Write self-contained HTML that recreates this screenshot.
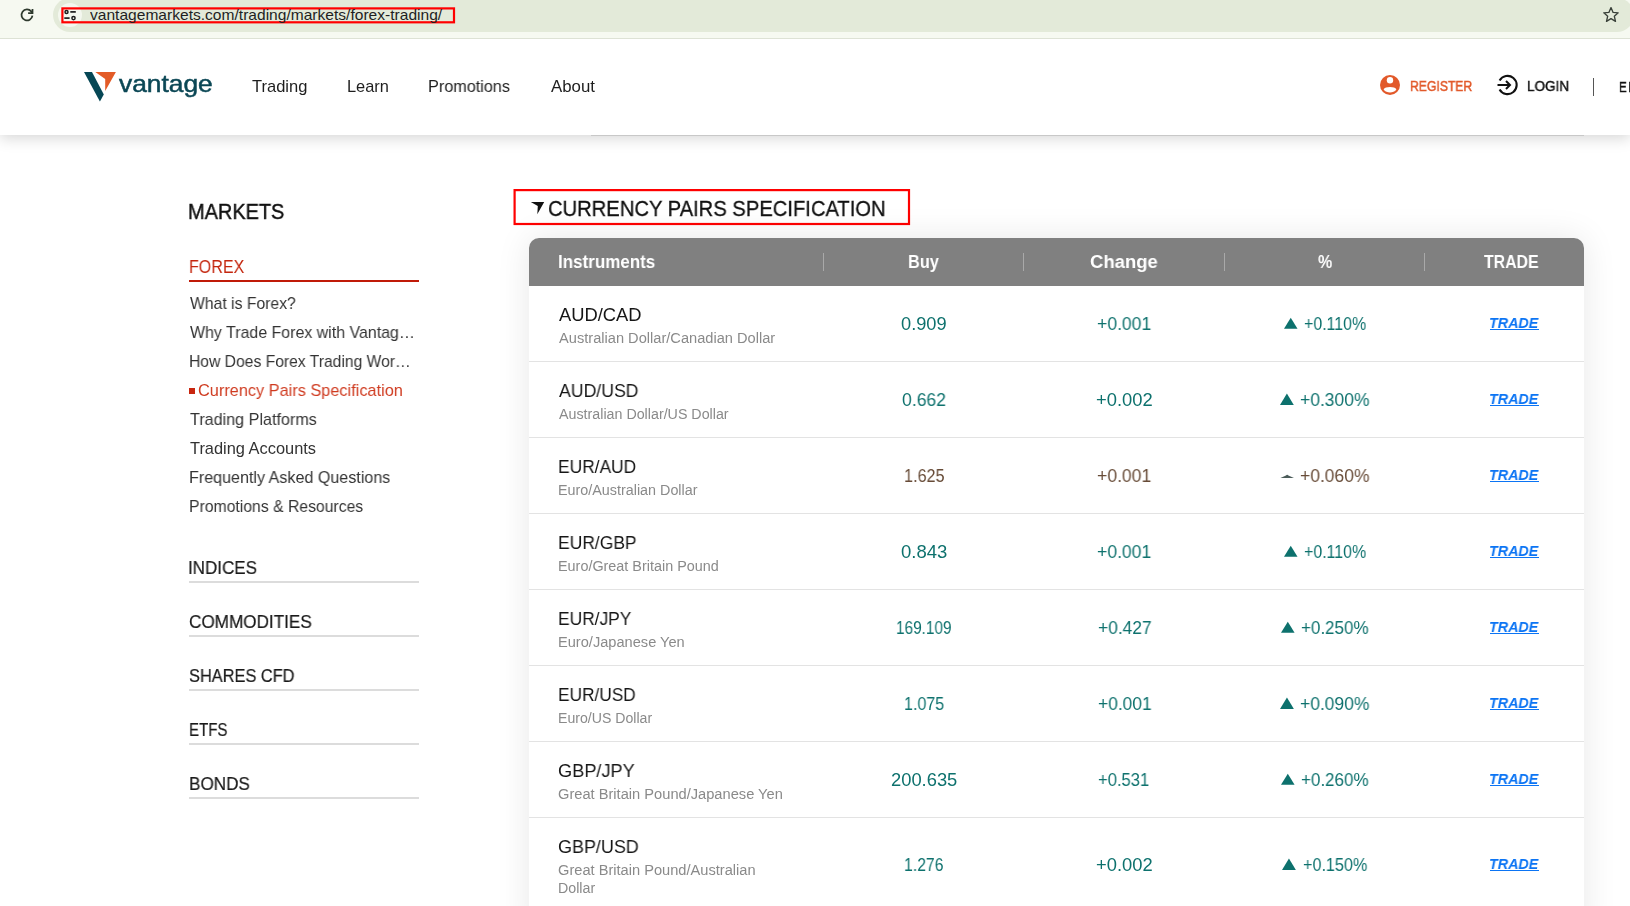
<!DOCTYPE html>
<html>
<head>
<meta charset="utf-8">
<style>
html,body{margin:0;padding:0;}
body{width:1630px;height:906px;overflow:hidden;position:relative;background:#ffffff;font-family:"Liberation Sans",sans-serif;}
.t{position:absolute;white-space:nowrap;line-height:1;transform-origin:0 0;font-family:"Liberation Sans",sans-serif;}
.abs{position:absolute;}
.tri{position:absolute;}
#toolbar{position:absolute;left:0;top:0;width:1630px;height:38px;background:#f6f9f1;border-bottom:1px solid #dde2d5;}
#pill{position:absolute;left:53px;top:-2px;width:1581px;height:34px;border-radius:17px;background:#e3ead9;}
#iconbg{position:absolute;left:58px;top:3px;width:24px;height:24px;border-radius:12px;background:#f4f7ef;}
#urlbox{position:absolute;left:61.3px;top:7.3px;width:389.8px;height:12.1px;border:2px solid #ff0000;}
#header{position:absolute;left:0;top:39px;width:1630px;height:96px;background:#ffffff;box-shadow:0 3px 14px rgba(0,0,0,0.17);}
#hline{position:absolute;left:591px;top:135px;width:993px;height:1px;background:#c8c8c8;}
.fline{position:absolute;left:189px;width:230px;height:2px;background:#dcdcdc;}
#titlebox{position:absolute;left:513px;top:189px;width:394px;height:32px;border:2px solid #ff0000;}
#table{position:absolute;left:529px;top:238px;width:1055px;height:700px;background:#fff;border-radius:10px 10px 0 0;box-shadow:0 0 34px rgba(0,0,0,0.095);}
#thead{position:absolute;left:529px;top:238px;width:1055px;height:48px;background:#808080;border-radius:10px 10px 0 0;}
.vdiv{position:absolute;top:253px;width:1px;height:18px;background:#a9a9a9;}
.hsep{position:absolute;left:529px;width:1055px;height:1px;background:#e3e3e3;}
</style>
</head>
<body>
<div id="header"></div>
<div id="toolbar"></div>
<div id="pill"></div>
<div id="iconbg"></div>
<!-- reload icon -->
<svg class="abs" style="left:16px;top:4px" width="22" height="22" viewBox="0 0 22 22">
  <path d="M16.45 11.67 A5.5 5.5 0 1 1 15.21 7.36 L16.3 8.9" fill="none" stroke="#2e3a2e" stroke-width="1.75"/>
  <polyline points="16.5,5.0 16.5,9.2 12.1,9.2" fill="none" stroke="#2e3a2e" stroke-width="1.75"/>
</svg>
<!-- tune icon -->
<svg class="abs" style="left:62px;top:8px" width="16" height="14" viewBox="0 0 16 14">
  <circle cx="4.5" cy="3.9" r="1.5" fill="none" stroke="#1c1c1c" stroke-width="1.5"/>
  <line x1="8.3" y1="3.9" x2="13.8" y2="3.9" stroke="#1c1c1c" stroke-width="1.7"/>
  <line x1="2.3" y1="10.1" x2="7.6" y2="10.1" stroke="#1c1c1c" stroke-width="1.7"/>
  <circle cx="11.5" cy="10.1" r="1.6" fill="none" stroke="#1c1c1c" stroke-width="1.5"/>
</svg>
<svg class="abs" style="left:0;top:0" width="470" height="30"><rect x="62.4" y="8.4" width="391.6" height="13.9" fill="none" stroke="#ff0000" stroke-width="2.2"/></svg>
<!-- star -->
<svg class="abs" style="left:1602px;top:6px" width="18" height="18" viewBox="0 0 18 18">
  <polygon points="9,1.6 11.1,6.4 16.2,6.8 12.3,10.2 13.5,15.3 9,12.6 4.5,15.3 5.7,10.2 1.8,6.8 6.9,6.4" fill="none" stroke="#394039" stroke-width="1.35" stroke-linejoin="round"/>
</svg>

<div id="hline"></div>
<!-- logo -->
<svg class="abs" style="left:80px;top:68px" width="140" height="36" viewBox="80 68 140 36">
  <polygon points="84,72 92,72 103.8,94.4 99.9,101.4" fill="#064755"/>
  <polygon points="95.3,72 115.9,72 105.2,91 105.2,78.9" fill="#e35b27"/>
</svg>
<!-- register icon -->
<svg class="abs" style="left:1379px;top:74px" width="22" height="22" viewBox="0 0 22 22">
  <circle cx="11" cy="11" r="10" fill="#e2592a"/>
  <circle cx="11" cy="6.3" r="3.2" fill="#fff"/>
  <path d="M4.6 15.4 C6 12.2 16 12.2 17.4 15.4 C15.8 17.6 13.5 18.4 11 18.4 C8.5 18.4 6.2 17.6 4.6 15.4 Z" fill="#fff"/>
</svg>
<!-- login icon -->
<svg class="abs" style="left:1496px;top:74px" width="22" height="22" viewBox="0 0 22 22">
  <path d="M3.6 6.6 A9.1 9.1 0 1 1 3.6 15.4" fill="none" stroke="#111" stroke-width="2.1"/>
  <line x1="1.5" y1="11" x2="14" y2="11" stroke="#111" stroke-width="2"/>
  <polyline points="10,7 14,11 10,15" fill="none" stroke="#111" stroke-width="2"/>
</svg>
<div class="abs" style="left:1593px;top:78px;width:1px;height:18px;background:#555"></div>

<!-- sidebar lines -->
<div class="abs" style="left:189px;top:280px;width:230px;height:2px;background:#c01a08"></div>
<div class="abs" style="left:189px;top:388px;width:6px;height:6px;background:#c8260f"></div>
<div class="fline" style="top:581px"></div>
<div class="fline" style="top:635px"></div>
<div class="fline" style="top:689px"></div>
<div class="fline" style="top:743px"></div>
<div class="fline" style="top:797px"></div>

<!-- title -->
<svg class="abs" style="left:500px;top:180px" width="420" height="50"><rect x="14.6" y="10.1" width="394.4" height="33.9" fill="none" stroke="#ff0000" stroke-width="2.2"/></svg>
<svg class="abs" style="left:528px;top:199px" width="20" height="18" viewBox="528 199 20 18">
  <polygon points="530.8,202 544.2,202 537.3,214.2 537.8,206" fill="#111"/>
</svg>

<!-- table -->
<div id="table"></div>
<div id="thead"></div>
<div class="vdiv" style="left:823px"></div>
<div class="vdiv" style="left:1023px"></div>
<div class="vdiv" style="left:1224px"></div>
<div class="vdiv" style="left:1424px"></div>
<div class="hsep" style="top:361px"></div>
<div class="hsep" style="top:437px"></div>
<div class="hsep" style="top:513px"></div>
<div class="hsep" style="top:589px"></div>
<div class="hsep" style="top:665px"></div>
<div class="hsep" style="top:741px"></div>
<div class="hsep" style="top:817px"></div>

<span class=t style="left:90.20px;top:7.80px;font-size:14.6px;color:#1f1f1f;font-weight:400;font-style:normal;transform:scaleX(1.0667);">vantagemarkets.com/trading/markets/forex-trading/</span>
<span class=t style="left:119.30px;top:71.60px;font-size:24.0px;color:#0b4755;font-weight:400;font-style:normal;transform:scaleX(1.0976);-webkit-text-stroke:0.5px #0b4755;will-change:transform;">vantage</span>
<span class=t style="left:251.80px;top:78.10px;font-size:16.4px;color:#1e1e1e;font-weight:400;font-style:normal;transform:scaleX(1.0074);will-change:transform;">Trading</span>
<span class=t style="left:346.51px;top:78.10px;font-size:16.4px;color:#1e1e1e;font-weight:400;font-style:normal;transform:scaleX(0.9925);will-change:transform;">Learn</span>
<span class=t style="left:427.61px;top:78.10px;font-size:16.4px;color:#1e1e1e;font-weight:400;font-style:normal;transform:scaleX(0.9890);will-change:transform;">Promotions</span>
<span class=t style="left:550.90px;top:78.10px;font-size:16.4px;color:#1e1e1e;font-weight:400;font-style:normal;transform:scaleX(1.0256);will-change:transform;">About</span>
<span class=t style="left:1409.84px;top:78.80px;font-size:14.2px;color:#e2592a;font-weight:400;font-style:normal;transform:scaleX(0.8577);-webkit-text-stroke:0.45px #e2592a;will-change:transform;">REGISTER</span>
<span class=t style="left:1526.65px;top:78.80px;font-size:14.2px;color:#161616;font-weight:400;font-style:normal;transform:scaleX(0.9500);-webkit-text-stroke:0.45px #161616;will-change:transform;">LOGIN</span>
<span class=t style="left:1619.44px;top:78.90px;font-size:15.0px;color:#111111;font-weight:400;font-style:normal;transform:scaleX(0.7556);-webkit-text-stroke:0.5px #111111;will-change:transform;">E</span>
<span class=t style="left:1628.11px;top:78.90px;font-size:15.0px;color:#111111;font-weight:400;font-style:normal;transform:scaleX(1.0889);-webkit-text-stroke:0.5px #111111;will-change:transform;">N</span>
<span class=t style="left:188.17px;top:200.90px;font-size:21.8px;color:#111111;font-weight:400;font-style:normal;transform:scaleX(0.9147);-webkit-text-stroke:0.4px #111111;will-change:transform;">MARKETS</span>
<span class=t style="left:188.82px;top:258.10px;font-size:18.2px;color:#c4260e;font-weight:400;font-style:normal;transform:scaleX(0.8820);will-change:transform;">FOREX</span>
<span class=t style="left:189.60px;top:295.00px;font-size:16.4px;color:#333333;font-weight:400;font-style:normal;transform:scaleX(0.9600);will-change:transform;">What is Forex?</span>
<span class=t style="left:189.60px;top:324.00px;font-size:16.4px;color:#333333;font-weight:400;font-style:normal;transform:scaleX(0.9729);will-change:transform;">Why Trade Forex with Vantag…</span>
<span class=t style="left:188.64px;top:353.00px;font-size:16.4px;color:#333333;font-weight:400;font-style:normal;transform:scaleX(0.9559);will-change:transform;">How Does Forex Trading Wor…</span>
<span class=t style="left:198.40px;top:382.00px;font-size:16.4px;color:#cf3a1f;font-weight:400;font-style:normal;transform:scaleX(0.9951);will-change:transform;">Currency Pairs Specification</span>
<span class=t style="left:189.60px;top:411.00px;font-size:16.4px;color:#333333;font-weight:400;font-style:normal;transform:scaleX(0.9852);will-change:transform;">Trading Platforms</span>
<span class=t style="left:189.60px;top:440.00px;font-size:16.4px;color:#333333;font-weight:400;font-style:normal;transform:scaleX(0.9968);will-change:transform;">Trading Accounts</span>
<span class=t style="left:188.62px;top:469.00px;font-size:16.4px;color:#333333;font-weight:400;font-style:normal;transform:scaleX(0.9819);will-change:transform;">Frequently Asked Questions</span>
<span class=t style="left:188.64px;top:498.00px;font-size:16.4px;color:#333333;font-weight:400;font-style:normal;transform:scaleX(0.9611);will-change:transform;">Promotions &amp; Resources</span>
<span class=t style="left:187.83px;top:559.10px;font-size:18.2px;color:#1a1a1a;font-weight:400;font-style:normal;transform:scaleX(0.9338);-webkit-text-stroke:0.2px #1a1a1a;will-change:transform;">INDICES</span>
<span class=t style="left:188.76px;top:612.80px;font-size:18.2px;color:#1a1a1a;font-weight:400;font-style:normal;transform:scaleX(0.9419);-webkit-text-stroke:0.2px #1a1a1a;will-change:transform;">COMMODITIES</span>
<span class=t style="left:188.80px;top:666.90px;font-size:18.2px;color:#1a1a1a;font-weight:400;font-style:normal;transform:scaleX(0.9000);-webkit-text-stroke:0.2px #1a1a1a;will-change:transform;">SHARES CFD</span>
<span class=t style="left:188.87px;top:720.90px;font-size:18.2px;color:#1a1a1a;font-weight:400;font-style:normal;transform:scaleX(0.8289);-webkit-text-stroke:0.2px #1a1a1a;will-change:transform;">ETFS</span>
<span class=t style="left:188.76px;top:775.00px;font-size:18.2px;color:#1a1a1a;font-weight:400;font-style:normal;transform:scaleX(0.9413);-webkit-text-stroke:0.2px #1a1a1a;will-change:transform;">BONDS</span>
<span class=t style="left:548.29px;top:197.90px;font-size:22.2px;color:#111111;font-weight:400;font-style:normal;transform:scaleX(0.9098);-webkit-text-stroke:0.3px #111111;will-change:transform;">CURRENCY PAIRS SPECIFICATION</span>
<span class=t style="left:557.70px;top:253.20px;font-size:18.9px;color:#ffffff;font-weight:700;font-style:normal;transform:scaleX(0.9000);will-change:transform;">Instruments</span>
<span class=t style="left:907.84px;top:253.20px;font-size:18.9px;color:#ffffff;font-weight:700;font-style:normal;transform:scaleX(0.8629);will-change:transform;">Buy</span>
<span class=t style="left:1089.82px;top:253.20px;font-size:18.9px;color:#ffffff;font-weight:700;font-style:normal;transform:scaleX(0.9779);will-change:transform;">Change</span>
<span class=t style="left:1317.70px;top:253.20px;font-size:18.9px;color:#ffffff;font-weight:700;font-style:normal;transform:scaleX(0.8500);will-change:transform;">%</span>
<span class=t style="left:1484.00px;top:253.20px;font-size:18.9px;color:#ffffff;font-weight:700;font-style:normal;transform:scaleX(0.8385);will-change:transform;">TRADE</span>
<span class=t style="left:558.90px;top:306.20px;font-size:18.3px;color:#161616;font-weight:400;font-style:normal;transform:scaleX(1.0037);will-change:transform;">AUD/CAD</span>
<span class=t style="left:558.90px;top:330.80px;font-size:14.0px;color:#8a8a8a;font-weight:400;font-style:normal;transform:scaleX(1.0444);will-change:transform;">Australian Dollar/Canadian Dollar</span>
<span class=t style="left:901.08px;top:315.80px;font-size:17.9px;color:#0d716d;font-weight:400;font-style:normal;transform:scaleX(1.0186);will-change:transform;">0.909</span>
<span class=t style="left:1097.42px;top:315.80px;font-size:17.9px;color:#0d716d;font-weight:400;font-style:normal;transform:scaleX(0.9833);will-change:transform;">+0.001</span>
<span class=t style="left:1303.91px;top:315.80px;font-size:17.9px;color:#0d716d;font-weight:400;font-style:normal;transform:scaleX(0.8897);will-change:transform;">+0.110%</span>
<span class=t style="left:1488.88px;top:314.60px;font-size:15.5px;color:#0b74f4;font-weight:700;font-style:italic;transform:scaleX(0.9226);will-change:transform;">TRADE</span>
<span class=t style="left:558.90px;top:382.20px;font-size:18.3px;color:#161616;font-weight:400;font-style:normal;transform:scaleX(0.9659);will-change:transform;">AUD/USD</span>
<span class=t style="left:558.90px;top:406.80px;font-size:14.0px;color:#8a8a8a;font-weight:400;font-style:normal;transform:scaleX(1.0187);will-change:transform;">Australian Dollar/US Dollar</span>
<span class=t style="left:902.02px;top:391.80px;font-size:17.9px;color:#0d716d;font-weight:400;font-style:normal;transform:scaleX(0.9837);will-change:transform;">0.662</span>
<span class=t style="left:1095.87px;top:391.80px;font-size:17.9px;color:#0d716d;font-weight:400;font-style:normal;transform:scaleX(1.0278);will-change:transform;">+0.002</span>
<span class=t style="left:1299.92px;top:391.80px;font-size:17.9px;color:#0d716d;font-weight:400;font-style:normal;transform:scaleX(0.9771);will-change:transform;">+0.300%</span>
<span class=t style="left:1488.88px;top:390.60px;font-size:15.5px;color:#0b74f4;font-weight:700;font-style:italic;transform:scaleX(0.9226);will-change:transform;">TRADE</span>
<span class=t style="left:557.95px;top:458.20px;font-size:18.3px;color:#161616;font-weight:400;font-style:normal;transform:scaleX(0.9506);will-change:transform;">EUR/AUD</span>
<span class=t style="left:557.88px;top:482.80px;font-size:14.0px;color:#8a8a8a;font-weight:400;font-style:normal;transform:scaleX(1.0244);will-change:transform;">Euro/Australian Dollar</span>
<span class=t style="left:903.59px;top:467.80px;font-size:17.9px;color:#674b37;font-weight:400;font-style:normal;transform:scaleX(0.9070);will-change:transform;">1.625</span>
<span class=t style="left:1097.42px;top:467.80px;font-size:17.9px;color:#674b37;font-weight:400;font-style:normal;transform:scaleX(0.9833);will-change:transform;">+0.001</span>
<span class=t style="left:1299.92px;top:467.80px;font-size:17.9px;color:#674b37;font-weight:400;font-style:normal;transform:scaleX(0.9771);will-change:transform;">+0.060%</span>
<span class=t style="left:1488.88px;top:466.60px;font-size:15.5px;color:#0b74f4;font-weight:700;font-style:italic;transform:scaleX(0.9226);will-change:transform;">TRADE</span>
<span class=t style="left:557.94px;top:534.20px;font-size:18.3px;color:#161616;font-weight:400;font-style:normal;transform:scaleX(0.9550);will-change:transform;">EUR/GBP</span>
<span class=t style="left:557.87px;top:558.80px;font-size:14.0px;color:#8a8a8a;font-weight:400;font-style:normal;transform:scaleX(1.0277);will-change:transform;">Euro/Great Britain Pound</span>
<span class=t style="left:901.07px;top:543.80px;font-size:17.9px;color:#0d716d;font-weight:400;font-style:normal;transform:scaleX(1.0349);will-change:transform;">0.843</span>
<span class=t style="left:1097.42px;top:543.80px;font-size:17.9px;color:#0d716d;font-weight:400;font-style:normal;transform:scaleX(0.9833);will-change:transform;">+0.001</span>
<span class=t style="left:1303.91px;top:543.80px;font-size:17.9px;color:#0d716d;font-weight:400;font-style:normal;transform:scaleX(0.8897);will-change:transform;">+0.110%</span>
<span class=t style="left:1488.88px;top:542.60px;font-size:15.5px;color:#0b74f4;font-weight:700;font-style:italic;transform:scaleX(0.9226);will-change:transform;">TRADE</span>
<span class=t style="left:557.95px;top:610.20px;font-size:18.3px;color:#161616;font-weight:400;font-style:normal;transform:scaleX(0.9500);will-change:transform;">EUR/JPY</span>
<span class=t style="left:557.86px;top:634.80px;font-size:14.0px;color:#8a8a8a;font-weight:400;font-style:normal;transform:scaleX(1.0433);will-change:transform;">Euro/Japanese Yen</span>
<span class=t style="left:896.14px;top:619.80px;font-size:17.9px;color:#0d716d;font-weight:400;font-style:normal;transform:scaleX(0.8587);will-change:transform;">169.109</span>
<span class=t style="left:1097.53px;top:619.80px;font-size:17.9px;color:#0d716d;font-weight:400;font-style:normal;transform:scaleX(0.9722);will-change:transform;">+0.427</span>
<span class=t style="left:1300.85px;top:619.80px;font-size:17.9px;color:#0d716d;font-weight:400;font-style:normal;transform:scaleX(0.9500);will-change:transform;">+0.250%</span>
<span class=t style="left:1488.88px;top:618.60px;font-size:15.5px;color:#0b74f4;font-weight:700;font-style:italic;transform:scaleX(0.9226);will-change:transform;">TRADE</span>
<span class=t style="left:557.96px;top:686.20px;font-size:18.3px;color:#161616;font-weight:400;font-style:normal;transform:scaleX(0.9444);will-change:transform;">EUR/USD</span>
<span class=t style="left:557.89px;top:710.80px;font-size:14.0px;color:#8a8a8a;font-weight:400;font-style:normal;transform:scaleX(1.0076);will-change:transform;">Euro/US Dollar</span>
<span class=t style="left:903.80px;top:695.80px;font-size:17.9px;color:#0d716d;font-weight:400;font-style:normal;transform:scaleX(0.8977);will-change:transform;">1.075</span>
<span class=t style="left:1097.53px;top:695.80px;font-size:17.9px;color:#0d716d;font-weight:400;font-style:normal;transform:scaleX(0.9722);will-change:transform;">+0.001</span>
<span class=t style="left:1299.92px;top:695.80px;font-size:17.9px;color:#0d716d;font-weight:400;font-style:normal;transform:scaleX(0.9757);will-change:transform;">+0.090%</span>
<span class=t style="left:1488.88px;top:694.60px;font-size:15.5px;color:#0b74f4;font-weight:700;font-style:italic;transform:scaleX(0.9226);will-change:transform;">TRADE</span>
<span class=t style="left:557.91px;top:762.20px;font-size:18.3px;color:#161616;font-weight:400;font-style:normal;transform:scaleX(0.9934);will-change:transform;">GBP/JPY</span>
<span class=t style="left:557.85px;top:786.80px;font-size:14.0px;color:#8a8a8a;font-weight:400;font-style:normal;transform:scaleX(1.0465);will-change:transform;">Great Britain Pound/Japanese Yen</span>
<span class=t style="left:890.67px;top:771.80px;font-size:17.9px;color:#0d716d;font-weight:400;font-style:normal;transform:scaleX(1.0254);will-change:transform;">200.635</span>
<span class=t style="left:1098.47px;top:771.80px;font-size:17.9px;color:#0d716d;font-weight:400;font-style:normal;transform:scaleX(0.9278);will-change:transform;">+0.531</span>
<span class=t style="left:1300.85px;top:771.80px;font-size:17.9px;color:#0d716d;font-weight:400;font-style:normal;transform:scaleX(0.9500);will-change:transform;">+0.260%</span>
<span class=t style="left:1488.88px;top:770.60px;font-size:15.5px;color:#0b74f4;font-weight:700;font-style:italic;transform:scaleX(0.9226);will-change:transform;">TRADE</span>
<span class=t style="left:557.92px;top:837.70px;font-size:18.3px;color:#161616;font-weight:400;font-style:normal;transform:scaleX(0.9815);will-change:transform;">GBP/USD</span>
<span class=t style="left:557.86px;top:862.80px;font-size:14.0px;color:#8a8a8a;font-weight:400;font-style:normal;transform:scaleX(1.0449);will-change:transform;">Great Britain Pound/Australian</span>
<span class=t style="left:558.18px;top:880.70px;font-size:14.0px;color:#8a8a8a;font-weight:400;font-style:normal;transform:scaleX(1.0167);will-change:transform;">Dollar</span>
<span class=t style="left:903.82px;top:856.80px;font-size:17.9px;color:#0d716d;font-weight:400;font-style:normal;transform:scaleX(0.8837);will-change:transform;">1.276</span>
<span class=t style="left:1096.17px;top:856.80px;font-size:17.9px;color:#0d716d;font-weight:400;font-style:normal;transform:scaleX(1.0259);will-change:transform;">+0.002</span>
<span class=t style="left:1302.50px;top:856.80px;font-size:17.9px;color:#0d716d;font-weight:400;font-style:normal;transform:scaleX(0.9043);will-change:transform;">+0.150%</span>
<span class=t style="left:1488.88px;top:855.60px;font-size:15.5px;color:#0b74f4;font-weight:700;font-style:italic;transform:scaleX(0.9226);will-change:transform;">TRADE</span>
<div class=abs style='left:1489.8px;top:329.2px;width:48.9px;height:1.2px;background:#0b74f4'></div>
<svg class=tri style='left:1284.3px;top:317.3px' width='13.5' height='12' viewBox='0 0 14 12'><polygon points='7,0.5 14,12 0,12' fill='#0d716d'/></svg>
<div class=abs style='left:1489.8px;top:405.2px;width:48.9px;height:1.2px;background:#0b74f4'></div>
<svg class=tri style='left:1280.3px;top:393.3px' width='13.8' height='12' viewBox='0 0 14 12'><polygon points='7,0.5 14,12 0,12' fill='#0d716d'/></svg>
<div class=abs style='left:1489.8px;top:481.2px;width:48.9px;height:1.2px;background:#0b74f4'></div>
<svg class=tri style='left:1280.0px;top:472.6px' width='14.4' height='6' viewBox='0 0 14 6'><path d='M0.2 4.9 L5.8 2.4 Q7 1.2 8.2 2.4 L13.8 4.9 Z' fill='#4b5c5a'/></svg>
<div class=abs style='left:1489.8px;top:557.2px;width:48.9px;height:1.2px;background:#0b74f4'></div>
<svg class=tri style='left:1284.3px;top:545.3px' width='13.5' height='12' viewBox='0 0 14 12'><polygon points='7,0.5 14,12 0,12' fill='#0d716d'/></svg>
<div class=abs style='left:1489.8px;top:633.2px;width:48.9px;height:1.2px;background:#0b74f4'></div>
<svg class=tri style='left:1281.1px;top:621.3px' width='13.6' height='12' viewBox='0 0 14 12'><polygon points='7,0.5 14,12 0,12' fill='#0d716d'/></svg>
<div class=abs style='left:1489.8px;top:709.2px;width:48.9px;height:1.2px;background:#0b74f4'></div>
<svg class=tri style='left:1280.2px;top:697.3px' width='13.9' height='12' viewBox='0 0 14 12'><polygon points='7,0.5 14,12 0,12' fill='#0d716d'/></svg>
<div class=abs style='left:1489.8px;top:785.2px;width:48.9px;height:1.2px;background:#0b74f4'></div>
<svg class=tri style='left:1281.1px;top:773.3px' width='13.6' height='12' viewBox='0 0 14 12'><polygon points='7,0.5 14,12 0,12' fill='#0d716d'/></svg>
<div class=abs style='left:1489.8px;top:870.2px;width:48.9px;height:1.2px;background:#0b74f4'></div>
<svg class=tri style='left:1281.7px;top:858.3px' width='13.9' height='12' viewBox='0 0 14 12'><polygon points='7,0.5 14,12 0,12' fill='#0d716d'/></svg>
<!-- logo text -->
</body>
</html>
